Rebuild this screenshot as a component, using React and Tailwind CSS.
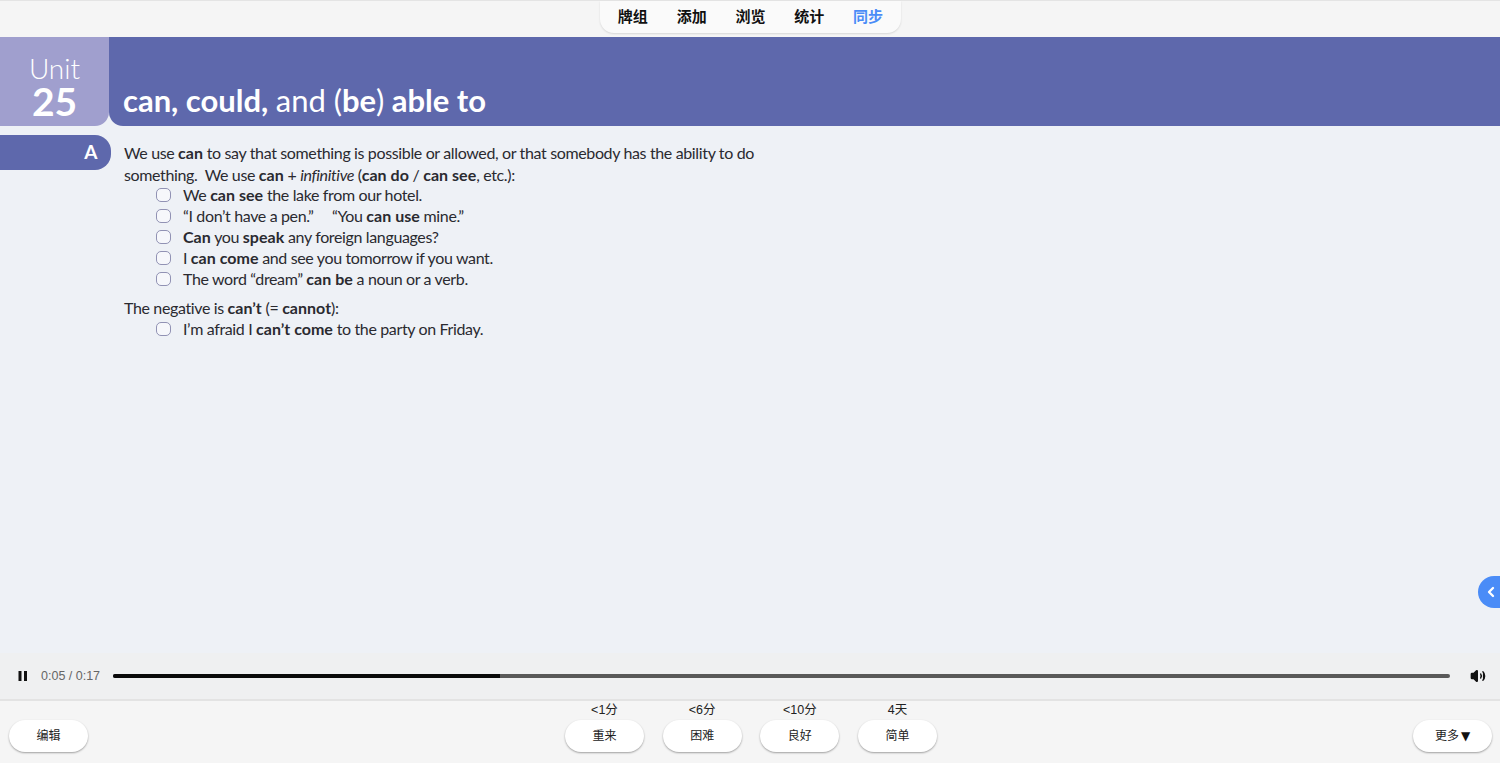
import { ChevronLeft, Volume2 } from 'lucide-react';

const cjk = '[font-family:"Liberation_Sans","Noto_Sans_CJK_SC",sans-serif]';

const navItems = ['牌组', '添加', '浏览', '统计'];

const answers = [
  { time: '<1分', label: '重来' },
  { time: '<6分', label: '困难' },
  { time: '<10分', label: '良好' },
  { time: '4天', label: '简单' },
];

function Box() {
  return <span className="w-[15px] h-[14px] rounded-[5px] border-[1.5px] border-[#9192b4] bg-[#f6f7fb] shrink-0" />;
}

function Example({ children }) {
  return (
    <div className="flex items-center h-[21px] pl-[32px]">
      <Box />
      <p className="ml-[12px] whitespace-pre">{children}</p>
    </div>
  );
}

function PillButton({ children, className = 'w-[79px]' }) {
  return (
    <button className={`${className} h-[32px] rounded-[16px] bg-white text-[12px] text-[#222] shadow-[0_1px_2px_rgba(0,0,0,0.35)] flex items-center justify-center`}>
      {children}
    </button>
  );
}

export default function App() {
  return (
    <div className={`relative w-[1500px] h-[763px] overflow-hidden flex flex-col bg-[#eef1f6] ${cjk}`}>
      <div className="h-[37px] shrink-0 bg-[#f5f5f5] border-t border-[#e4e4e4] flex justify-center">
        <nav className="w-[301px] h-[32px] rounded-b-[14px] bg-[#fafafa] shadow-[0_1px_2px_rgba(0,0,0,0.12)] flex items-center justify-center gap-[28.8px] pl-[1px] text-[15px] font-bold text-[#111]">
          {navItems.map(n => <span key={n}>{n}</span>)}
          <span className="text-[#4a8cf7]">同步</span>
        </nav>
      </div>

      <header className="h-[89px] shrink-0 flex text-white font-['Lato',sans-serif]">
        <div className="w-[109px] shrink-0 bg-[#a09fce] rounded-br-[14px] flex flex-col items-center pt-[15px]">
          <span className="text-[28px] font-light leading-[32px] h-[30px]">Unit</span>
          <span className="text-[39px] font-bold leading-[38px]">25</span>
        </div>
        <div className="flex-1 bg-[#5e68ac] rounded-bl-[14px] flex items-end pl-[14px] pb-[5px]">
          <h1 className="text-[31px] leading-[42px] font-bold tracking-[-0.02px]">
            can, could, <span className="font-normal">and (</span>be<span className="font-normal">)</span> able to
          </h1>
        </div>
      </header>

      <main className="flex-1 flex items-start font-['Lato',sans-serif] text-[16px] text-[#2a2a30] tracking-[-0.36px] [&_b]:tracking-[0.02px]">
        <div className="w-[111px] h-[35px] mt-[9px] shrink-0 bg-[#5e68ac] rounded-r-[16px] flex items-center justify-end pr-[14px] pb-[1px] text-white font-bold text-[19px]">
          A
        </div>
        <div className="ml-[13px] mt-[16px] w-[660px]">
          <p className="leading-[22px]">We use <b>can</b> to say that something is possible or allowed, or that somebody has the ability to do</p>
          <p className="leading-[22px] whitespace-pre">something.  We use <b>can</b> + <i>infinitive</i> (<b>can do</b> / <b>can see</b>, etc.):</p>
          <div className="-mt-[2px]">
            <Example>We <b>can see</b> the lake from our hotel.</Example>
            <Example>“I don’t have a pen.”     “You <b>can use</b> mine.”</Example>
            <Example><b>Can</b> you <b>speak</b> any foreign languages?</Example>
            <Example>I <b>can come</b> and see you tomorrow if you want.</Example>
            <Example>The word “dream” <b>can be</b> a noun or a verb.</Example>
          </div>
          <p className="leading-[21px] mt-[8px]">The negative is <b>can’t</b> (= <b>cannot</b>):</p>
          <Example>I’m afraid I <b>can’t come</b> to the party on Friday.</Example>
        </div>
      </main>

      <div className="absolute right-0 top-[576px] w-[22px] h-[32px] rounded-l-[16px] bg-[#4a8cf7] flex items-center justify-end text-white">
        <ChevronLeft size={16} strokeWidth={3.5} className="mr-[1px]" />
      </div>

      <div className="h-[46px] shrink-0 bg-[#eff0f1] flex items-center pl-[17px] pr-[14px]">
        <svg width="12" height="12" viewBox="0 0 12 12" className="shrink-0" fill="#111">
          <rect x="1.5" y="1" width="3" height="10" />
          <rect x="7" y="1" width="3" height="10" />
        </svg>
        <span className="ml-[12px] text-[12.5px] text-[#666] w-[59px] whitespace-nowrap">0:05 / 0:17</span>
        <div className="ml-[13px] flex-1 h-[4px] rounded-full bg-[#595959] overflow-hidden">
          <div className="h-full bg-[#0a0a0a]" style={{ width: `${(387 / 1337) * 100}%` }} />
        </div>
        <Volume2 size={16} fill="#111" strokeWidth={2} className="ml-[20px] text-[#111] shrink-0" />
      </div>

      <footer className="h-[64px] shrink-0 bg-[#f5f5f5] border-t-2 border-[#e3e3e3] relative flex items-end justify-between pl-[9px] pr-[8px] pb-[11px]">
        <PillButton>编辑</PillButton>
        <div className="absolute left-[565px] top-0 flex gap-[18.7px]">
          {answers.map(a => (
            <div key={a.label} className="w-[79px] flex flex-col items-center">
              <span className="text-[12.5px] leading-[16px] mt-[1px] mb-[2px] text-[#222]">{a.time}</span>
              <PillButton>{a.label}</PillButton>
            </div>
          ))}
        </div>
        <PillButton>更多 <span className="ml-[2px] text-[12px] font-['DejaVu_Sans',sans-serif] text-[#111]">▼</span></PillButton>
      </footer>
    </div>
  );
}
